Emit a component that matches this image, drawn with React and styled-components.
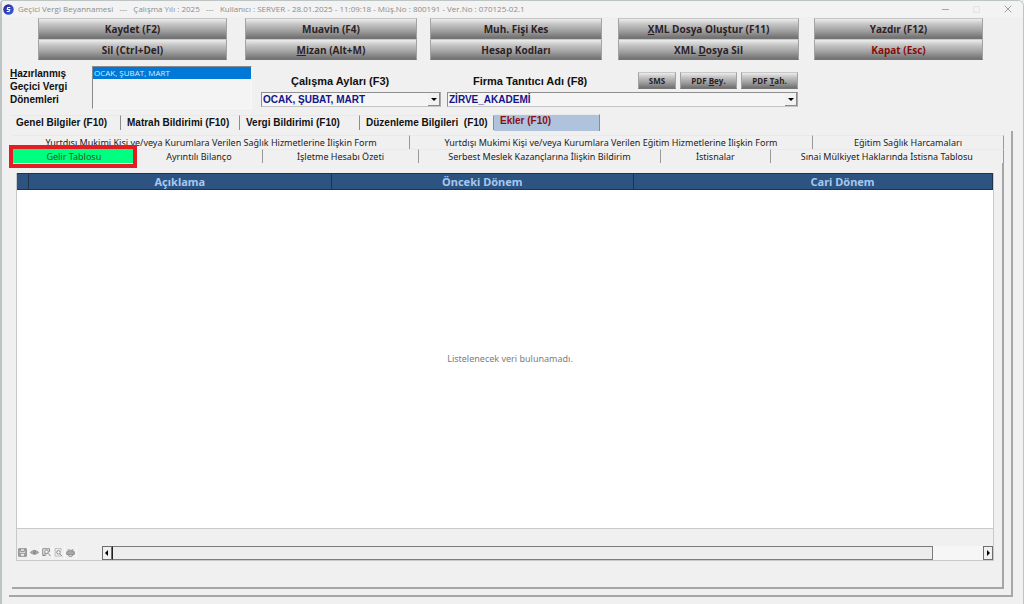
import React from "react";
import styled, { createGlobalStyle } from "styled-components";

const ui = `"Open Sans", "Noto Sans", sans-serif`;
const arial = `"Liberation Sans", Arial, sans-serif`;
const tahoma = `"Noto Sans", "DejaVu Sans", sans-serif`;

const GlobalStyle = createGlobalStyle`
  *, *::before, *::after { box-sizing: border-box; }
  body { margin: 0; background: #f0f0f0; font-family: ${arial}; color: #111; }
  button, select { margin: 0; font: inherit; color: inherit; border-radius: 0; }
`;

const Window = styled.main`
  display: flex;
  flex-direction: column;
  min-height: 100vh;
  background: #f0f0f0;
  border: solid #bcc4c4;
  border-width: 1px 1px 0 2px;
  border-top-left-radius: 4px;
  border-top-right-radius: 6px;
  overflow: hidden;
`;

const TitleBar = styled.header`
  display: flex;
  align-items: center;
  height: 16px;
  padding-left: 1px;
  background: #f3f3f3;
`;

const Title = styled.h1`
  flex: 1;
  margin: 0 0 0 4px;
  font: 400 8px/14px ${ui};
  color: #8c8c8c;
  white-space: pre;
`;

const WindowButton = styled.button`
  display: grid;
  place-items: center;
  width: 31px;
  height: 16px;
  padding: 0;
  border: 0;
  background: none;
  color: ${(p) => (p.$faint ? "#dedede" : "#8e8e8e")};
`;

const Actions = styled.nav`
  display: flex;
  padding: 1px 40px 0 36px;
`;

const ActionColumn = styled.div`
  display: flex;
  flex-direction: column;
  flex: ${(p) => p.$grow} 1 0;
  margin-left: ${(p) => p.$gap}px;
`;

const GradientButton = styled.button`
  height: ${(p) => (p.$small ? 17 : 21)}px;
  width: ${(p) => (p.$width ? `${p.$width}px` : "auto")};
  padding: 0;
  border: 1px solid #a2a2a2;
  border-top-color: #c8c8c8;
  border-bottom-color: #757575;
  background: linear-gradient(#ececec 0%, #c4c4c4 28%, #a0a0a0 62%, #707070 100%);
  color: ${(p) => (p.$danger ? "#8b0a0a" : "#2c2226")};
  font: 700 ${(p) => (p.$small ? 8 : 10)}px/14px ${ui};
  white-space: nowrap;
`;

const Filters = styled.section`
  display: flex;
  align-items: flex-start;
  padding: 6px 0 0 8px;
  height: 54px;
`;

const PeriodLabel = styled.label`
  width: 82px;
  padding-top: 1px;
  font: 700 10px/13px ${arial};
`;

const PeriodList = styled.select`
  width: 160px;
  height: 43px;
  padding: 0;
  border: 1px solid #f8f8f8;
  border-top-color: #8a8a8a;
  border-left-color: #8a8a8a;
  background: #f4f4f4;
  font: 400 8px/12px ${ui};
  outline: none;
  overflow: hidden;

  option {
    min-height: 12px;
    padding: 0 1px;
  }
  option:checked {
    background: #0078d7 linear-gradient(#0078d7, #0078d7);
    color: #fff;
    -webkit-text-fill-color: #d8ecff;
  }
`;

const Field = styled.div`
  display: flex;
  flex-direction: column;
  width: ${(p) => p.$width}px;
  margin-left: ${(p) => p.$gap}px;
`;

const FieldHead = styled.div`
  display: flex;
  align-items: center;
  gap: 4px;
  height: 26px;
  padding-top: 3px;
`;

const FieldLabel = styled.label`
  flex: 1;
  padding-left: ${(p) => p.$indent}px;
  font: 700 11px/14px ${arial};
  white-space: nowrap;
`;

const SelectBox = styled.div`
  display: grid;
  grid-template-columns: 1fr 12px;
  height: 15px;
  border: 1px solid #8f8f8f;
  border-right-color: #a8a8a8;
  border-bottom-color: #c4c4c4;
  background: #f5f5f5;
`;

const Combo = styled.select`
  grid-area: 1 / 1 / 2 / 3;
  width: 100%;
  height: 13px;
  padding: 0 0 0 1px;
  border: 0;
  background: none;
  appearance: none;
  color: #14148a;
  font: 700 10px/13px ${arial};
`;

const ComboArrow = styled.span`
  grid-area: 1 / 2 / 2 / 3;
  display: grid;
  place-items: center;
  border: solid #8a8a8a;
  border-width: 0 1px 1px 0;
  background: #f2f2f2;
  pointer-events: none;
`;

const MainTabs = styled.div`
  display: flex;
  height: 17px;
  padding-left: 8px;
`;

const MainTab = styled.button`
  width: ${(p) => p.$width}px;
  height: ${(p) => (p.$active ? 17 : 15)}px;
  margin-top: ${(p) => (p.$active ? 0 : 1)}px;
  padding: 0 0 ${(p) => (p.$active ? 4 : 0)}px 6px;
  border: 0;
  border-right: 1px solid #8c8c8c;
  border-top: 1px solid #e9e9e9;
  background: ${(p) => (p.$active ? "#afc3dc" : "none")};
  color: ${(p) => (p.$active ? "#8b1016" : "#111")};
  font: 700 10px/12px ${arial};
  text-align: left;
  white-space: pre;
`;

const OuterPanel = styled.section`
  flex: 1;
  display: flex;
  flex-direction: column;
  margin: 0 10px 7px 7px;
  padding: 4px 7px 6px 3px;
  border: solid #a6a6a6;
  border-width: 0 2px 2px 0;
`;

const SubTabRow = styled.div`
  position: relative;
  display: flex;
  padding: 0 0 0 1px;
  height: 14px;
`;

const SubTab = styled.button`
  flex: ${(p) => p.$grow} 1 0;
  height: 14px;
  padding: 0;
  border: 0;
  border-right: 1px solid ${(p) => (p.$active ? "#00ff80" : "#999")};
  border-top: 1px solid ${(p) => (p.$active ? "#00ff80" : "#eaeaea")};
  background: ${(p) => (p.$active ? "#00ff80" : "none")};
  color: ${(p) => (p.$active ? "#1c5a1c" : "#222")};
  font: 400 9px/12px ${tahoma};
  white-space: nowrap;
`;

const Highlight = styled.div`
  position: absolute;
  top: -4px;
  left: -3px;
  width: 128px;
  height: 23px;
  border: 4px solid #e51c23;
  pointer-events: none;
`;

const InnerPanel = styled.div`
  flex: 1;
  display: flex;
  flex-direction: column;
  padding: 10px 8px 26px 4px;
  border: solid #a6a6a6;
  border-width: 0 2px 2px 0;
`;

const Grid = styled.div`
  flex: 1;
  display: flex;
  flex-direction: column;
  border: 1px solid #c9c9c9;
  border-top: 0;
  background: #fff;
`;

const Table = styled.table`
  width: 100%;
  border-collapse: separate;
  border-spacing: 0;
  table-layout: fixed;
`;

const HeadCell = styled.th`
  width: ${(p) => p.$width};
  height: 17px;
  padding: 0 0 0 ${(p) => p.$indent || 0}px;
  border: solid #1d3350;
  border-width: 1px 1px 1px 0;
  background: #2d5380;
  color: #a5c8f0;
  font: 700 11px/14px ${tahoma};
`;

const Empty = styled.p`
  flex: 1;
  display: grid;
  place-items: center;
  margin: 0 0 0 10px;
  color: #7d7d7d;
  font: 400 9px/12px ${tahoma};
`;

const Summary = styled.div`
  height: 18px;
  border-top: 1px solid #c9c9c9;
  background: #f0f0f0;
`;

const GridFooter = styled.footer`
  display: flex;
  height: 14px;
  background: #f0f0f0;
`;

const Tools = styled.div`
  display: flex;
  width: 85px;
`;

const ToolButton = styled.button`
  display: grid;
  place-items: center;
  width: 12px;
  height: 13px;
  padding: 0;
  border: 0;
  border-right: 1px solid #f8f8f8;
  background: none;
  color: #8a8a8a;
`;

const ScrollTrack = styled.div`
  flex: 1;
  display: flex;
  background: #f6f6f6;
`;

const ScrollButton = styled.button`
  display: grid;
  place-items: center;
  width: 10px;
  padding: 0;
  border: 1px solid #6e6e6e;
  background: #f0f0f0;
  color: #000;
`;

const ScrollThumb = styled.div`
  flex: 824 1 0;
  border: 1px solid #7c7c7c;
  border-left-color: #222;
  background: #ededed;
`;

const ScrollRest = styled.div`
  flex: 50 1 0;
`;

const actionColumns = [
  { grow: 189, gap: 0, items: [["", "", "Kaydet (F2)"], ["", "", "Sil (Ctrl+Del)"]] },
  { grow: 172, gap: 18, items: [["", "", "Muavin (F4)"], ["", "M", "izan (Alt+M)"]] },
  { grow: 172, gap: 13, items: [["", "", "Muh. Fişi Kes"], ["", "", "Hesap Kodları"]] },
  { grow: 181, gap: 16, items: [["", "X", "ML Dosya Oluştur (F11)"], ["XML ", "D", "osya Sil"]] },
  { grow: 169, gap: 15, items: [["", "", "Yazdır (F12)"], ["", "", "Kapat (Esc)"]] },
];

const mainTabs = [
  [111, "Genel Bilgiler (F10)"],
  [119, "Matrah Bildirimi (F10)"],
  [120, "Vergi Bildirimi (F10)"],
  [134, "Düzenleme Bilgileri  (F10)"],
  [106, "Ekler (F10)"],
];

const upperTabs = [
  [396, "Yurtdışı Mukimi Kişi ve/veya Kurumlara Verilen Sağlık Hizmetlerine İlişkin Form"],
  [402, "Yurtdışı Mukimi Kişi ve/veya Kurumlara Verilen Eğitim Hizmetlerine İlişkin Form"],
  [190, "Eğitim Sağlık Harcamaları"],
];

const lowerTabs = [
  [122, "Gelir Tablosu"],
  [127, "Ayrıntılı Bilanço"],
  [155, "İşletme Hesabı Özeti"],
  [242, "Serbest Meslek Kazançlarına İlişkin Bildirim"],
  [109, "İstisnalar"],
  [233, "Sınai Mülkiyet Haklarında İstisna Tablosu"],
];

const Icon = ({ size = 9, children }) => (
  <svg width={size} height={size} viewBox="0 0 12 12" fill="none" stroke="currentColor" strokeWidth="1.3" aria-hidden="true">
    {children}
  </svg>
);

const tools = [
  ["Kaydet", <><path d="M1 1h10v10H1zM3.5 1v3.5h5V1M3 11V7h6v4" /><path d="M1.5 1v10M10.5 1v10" /></>],
  ["Göster", <><path d="M0.5 6Q6 0.5 11.5 6Q6 10.5 0.5 6z" fill="#bdbdbd" /><circle cx="6" cy="6" r="1.8" fill="currentColor" /></>],
  ["Büyüt", <><path d="M1 1h9v4M1 1v9h4" /><circle cx="6" cy="5" r="2.5" /><path d="M8 7l3.5 4M2 8h4" /></>],
  ["Ara", <><path d="M1.5 0.8h8v3M1.5 0.8v10h8" opacity=".5" /><circle cx="6" cy="5.8" r="2.4" /><path d="M8 8l3 3" /></>],
  ["Yazdır", <><path d="M3 5V2l1 1h4l1-1v3" /><path d="M1 5h10v3.5H1z" fill="#b0b0b0" /><path d="M3 8.5L4 11h4l1-2.5" /></>],
];

const Arrow = ({ d, size = 6 }) => (
  <svg width={size} height={size} viewBox="0 0 6 6" fill="#000" aria-hidden="true">
    <path d={d} />
  </svg>
);

const Key = ({ parts: [before, key, after] }) => (
  <>{before}{key && <u>{key}</u>}{after}</>
);

export default function App() {
  return (
    <>
      <GlobalStyle />
      <Window>
        <TitleBar>
          <svg width="11" height="11" viewBox="0 0 22 22" aria-hidden="true">
            <defs>
              <linearGradient id="logo" x1="0" y1="0" x2="1" y2="1">
                <stop offset="0" stopColor="#35188c" />
                <stop offset="1" stopColor="#2f6be0" />
              </linearGradient>
            </defs>
            <circle cx="11" cy="11" r="10.5" fill="url(#logo)" />
            <path d="M14.5 7H9.5L8.5 10.5L13.5 11.5L12 15H7.5" fill="none" stroke="#fff" strokeWidth="2.4" />
          </svg>
          <Title>{"Geçici Vergi Beyannamesi   ---   Çalışma Yılı : 2025   ---   Kullanıcı : SERVER - 28.01.2025 - 11:09:18 - Müş.No : 800191 - Ver.No : 070125-02.1"}</Title>
          <WindowButton aria-label="Simge durumuna küçült"><Icon size={7}><path d="M0 6h12" /></Icon></WindowButton>
          <WindowButton aria-label="Ekranı kapla" $faint><Icon size={7}><path d="M1 1h10v10H1z" /></Icon></WindowButton>
          <WindowButton aria-label="Pencereyi kapat"><Icon size={8}><path d="M1 1l10 10M11 1L1 11" /></Icon></WindowButton>
        </TitleBar>

        <Actions>
          {actionColumns.map((col) => (
            <ActionColumn key={col.grow + "-" + col.gap} $grow={col.grow} $gap={col.gap}>
              {col.items.map((parts) => (
                <GradientButton key={parts.join("")} $danger={parts[2] === "Kapat (Esc)"}>
                  <Key parts={parts} />
                </GradientButton>
              ))}
            </ActionColumn>
          ))}
        </Actions>

        <Filters>
          <PeriodLabel htmlFor="periods"><u>H</u>azırlanmış Geçici Vergi Dönemleri</PeriodLabel>
          <PeriodList id="periods" size={3} defaultValue="q1">
            <option value="q1">OCAK, ŞUBAT, MART</option>
          </PeriodList>
          <Field $width={180} $gap={9}>
            <FieldHead><FieldLabel htmlFor="months" $indent={30}>Çalışma Ayları (F3)</FieldLabel></FieldHead>
            <SelectBox>
              <Combo id="months"><option>OCAK, ŞUBAT, MART</option></Combo>
              <ComboArrow><Arrow d="M0 2h6L3 5z" /></ComboArrow>
            </SelectBox>
          </Field>
          <Field $width={351} $gap={6}>
            <FieldHead>
              <FieldLabel htmlFor="firm" $indent={26}>Firma Tanıtıcı Adı (F8)</FieldLabel>
              <GradientButton $small $width={38}>SMS</GradientButton>
              <GradientButton $small $width={57}>PDF <u>B</u>ey.</GradientButton>
              <GradientButton $small $width={57}>PDF <u>T</u>ah.</GradientButton>
            </FieldHead>
            <SelectBox>
              <Combo id="firm"><option>ZİRVE_AKADEMİ</option></Combo>
              <ComboArrow><Arrow d="M0 2h6L3 5z" /></ComboArrow>
            </SelectBox>
          </Field>
        </Filters>

        <MainTabs role="tablist">
          {mainTabs.map(([width, text], i) => (
            <MainTab key={text} role="tab" aria-selected={i === 4} $width={width} $active={i === 4}>{text}</MainTab>
          ))}
        </MainTabs>

        <OuterPanel>
          <SubTabRow role="tablist">
            {upperTabs.map(([grow, text]) => (
              <SubTab key={text} role="tab" $grow={grow}>{text}</SubTab>
            ))}
          </SubTabRow>
          <SubTabRow role="tablist">
            {lowerTabs.map(([grow, text], i) => (
              <SubTab key={text} role="tab" aria-selected={i === 0} $grow={grow} $active={i === 0}>{text}</SubTab>
            ))}
            <Highlight />
          </SubTabRow>
          <InnerPanel>
            <Grid>
              <Table>
                <thead>
                  <tr>
                    <HeadCell $width="12px" aria-label="Seçim" />
                    <HeadCell $width="31%">Açıklama</HeadCell>
                    <HeadCell $width="31%">Önceki Dönem</HeadCell>
                    <HeadCell $indent={59}>Cari Dönem</HeadCell>
                  </tr>
                </thead>
              </Table>
              <Empty>Listelenecek veri bulunamadı.</Empty>
              <Summary />
              <GridFooter>
                <Tools>
                  {tools.map(([name, drawing]) => (
                    <ToolButton key={name} aria-label={name}><Icon>{drawing}</Icon></ToolButton>
                  ))}
                </Tools>
                <ScrollTrack>
                  <ScrollButton aria-label="Sola kaydır"><Arrow d="M4 0v6L1 3z" /></ScrollButton>
                  <ScrollThumb />
                  <ScrollRest />
                  <ScrollButton aria-label="Sağa kaydır"><Arrow d="M2 0v6l3-3z" /></ScrollButton>
                </ScrollTrack>
              </GridFooter>
            </Grid>
          </InnerPanel>
        </OuterPanel>
      </Window>
    </>
  );
}
